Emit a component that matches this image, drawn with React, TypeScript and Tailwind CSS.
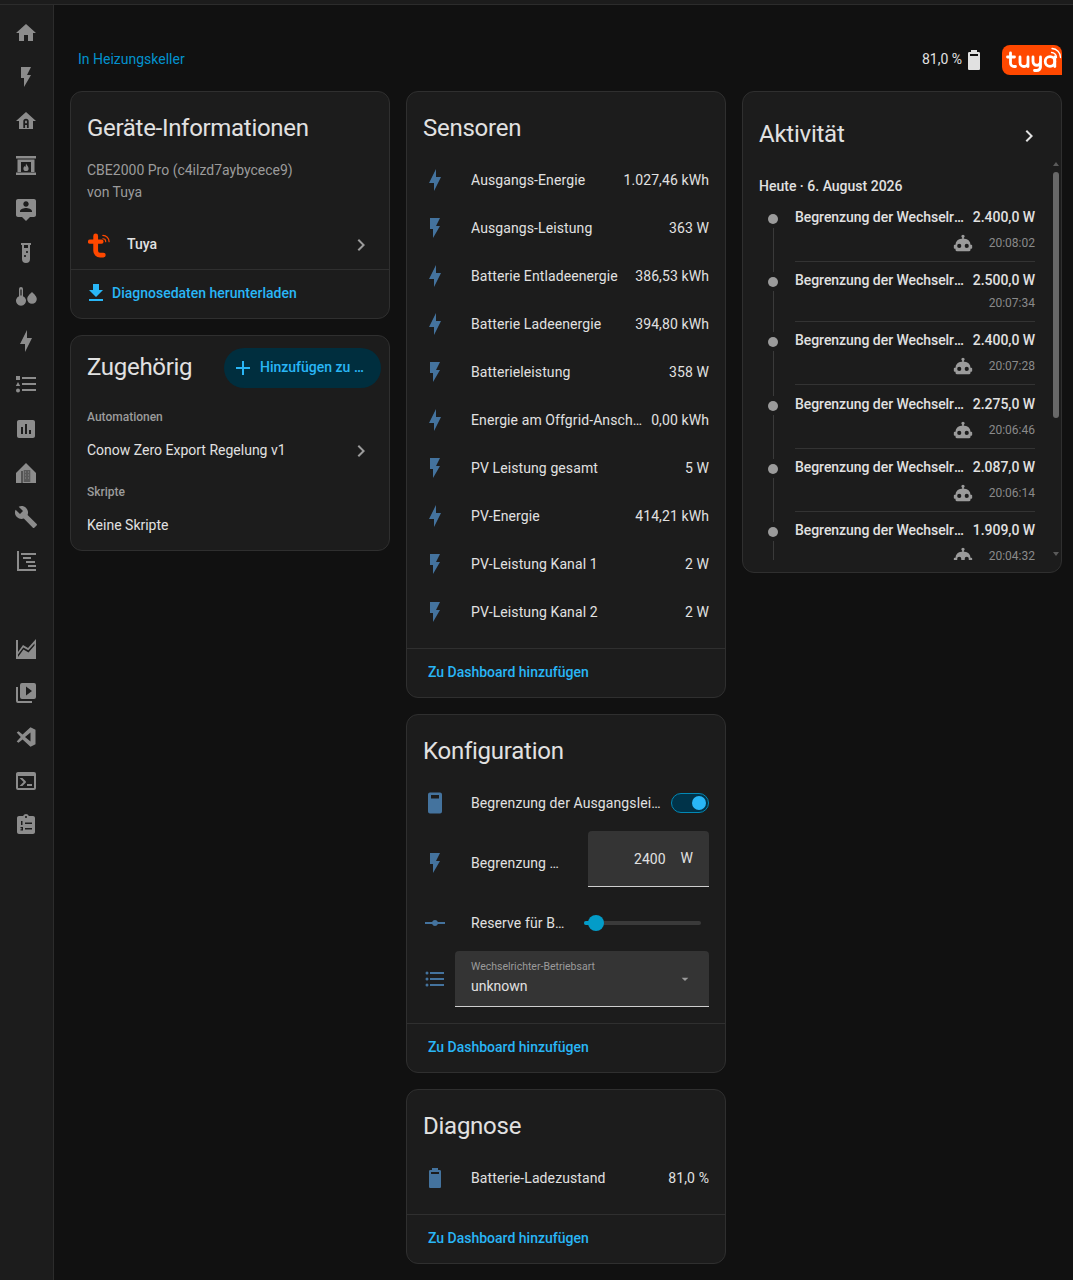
const BOLT = "M11 15H6L13 1V9H18L11 23V15Z"
const FLASH = "M7,2V13H10V22L17,10H13L17,2H7Z"
const BATTERY = "M16,8H8V6H16M16.67,4H15V2H9V4H7.33A1.33,1.33 0 0,0 6,5.33V20.66C6,21.4 6.6,22 7.33,22H16.67C17.41,22 18,21.4 18,20.67V5.33C18,4.6 17.4,4 16.67,4Z"
const ROBOT = "M12,2A2,2 0 0,1 14,4C14,4.74 13.6,5.39 13,5.73V7H14A7,7 0 0,1 21,14H22A1,1 0 0,1 23,15V18A1,1 0 0,1 22,19H21V20A2,2 0 0,1 19,22H5A2,2 0 0,1 3,20V19H2A1,1 0 0,1 1,18V15A1,1 0 0,1 2,14H3A7,7 0 0,1 10,7H11V5.73C10.4,5.39 10,4.74 10,4A2,2 0 0,1 12,2M7.5,13A2.5,2.5 0 0,0 5,15.5A2.5,2.5 0 0,0 7.5,18A2.5,2.5 0 0,0 10,15.5A2.5,2.5 0 0,0 7.5,13M16.5,13A2.5,2.5 0 0,0 14,15.5A2.5,2.5 0 0,0 16.5,18A2.5,2.5 0 0,0 19,15.5A2.5,2.5 0 0,0 16.5,13Z"
const CHEVRON = "M8.59,16.58L13.17,12L8.59,7.41L10,6L16,12L10,18L8.59,16.58Z"
const LIST = "M7,5H21V7H7V5M7,13V11H21V13H7M4,4.5A1.5,1.5 0 0,1 5.5,6A1.5,1.5 0 0,1 4,7.5A1.5,1.5 0 0,1 2.5,6A1.5,1.5 0 0,1 4,4.5M4,10.5A1.5,1.5 0 0,1 5.5,12A1.5,1.5 0 0,1 4,13.5A1.5,1.5 0 0,1 2.5,12A1.5,1.5 0 0,1 4,10.5M7,19V17H21V19H7M4,16.5A1.5,1.5 0 0,1 5.5,18A1.5,1.5 0 0,1 4,19.5A1.5,1.5 0 0,1 2.5,18A1.5,1.5 0 0,1 4,16.5Z"

function Icon({ d, className }: { d: string; className: string }) {
  return (
    <svg viewBox="0 0 24 24" className={className} fill="currentColor">
      <path d={d} fillRule="evenodd" />
    </svg>
  )
}

const topNav = [
  "M10,20V14H14V20H19V12H22L12,3L2,12H5V20H10Z",
  FLASH,
  "M12 3L2 12h3v8h14v-8h3L12 3zM9.3 19v-6.5a2.7 2.7 0 015.4 0V19h-1.8v-3h-1.8v3H9.3zM11.1 14.3h1.8v-1.8a.9.9 0 00-1.8 0v1.8z",
  "M2 3h20v2.500H2V3zM3.500 6.500h17V19h-17V6.500zM7 9v10h10V9H7zM2 19.500h20V22H2v-2.500zM12 10.500c.4 1.600 2.600 2.600 2.600 5a2.600 2.600 0 01-5.200 0c0-1.300.8-2 1.200-2.600.3.600.6.800 1 .9.2-1.100.2-2.200.4-3.300z",
  "M20 2H4C2.9 2 2 2.9 2 4V18C2 19.1 2.9 20 4 20H8L12 24L16 20H20C21.1 20 22 19.1 22 18V4C22 2.9 21.1 2 20 2M12 4.3C13.5 4.3 14.7 5.5 14.7 7C14.7 8.5 13.5 9.7 12 9.7C10.5 9.7 9.3 8.5 9.3 7C9.3 5.5 10.5 4.3 12 4.3M18 15H6V14.1C6 12.1 10 11 12 11C14 11 18 12.1 18 14.1V15Z",
  "M7,2V4H8V18A4,4 0 0,0 12,22A4,4 0 0,0 16,18V4H17V2H7M11,16C10.4,16 10,15.6 10,15C10,14.4 10.4,14 11,14C11.6,14 12,14.4 12,15C12,15.6 11.6,16 11,16M13,12C12.4,12 12,11.6 12,11C12,10.4 12.4,10 13,10C13.6,10 14,10.4 14,11C14,11.6 13.6,12 13,12M14,7H10V4H14V7Z",
  "M7 2a2 2 0 012 2v7.200a5 5 0 11-4 0V4a2 2 0 012-2zM6.400 4.500v6h1.200v-6h-1.200zM18 7s4.800 3.900 4.800 7a4.800 4.800 0 01-9.600 0C13.200 10.900 18 7 18 7z",
  BOLT,
  "M2 3h4v4H2V3zM8 4h14v2H8V4zM4 9l2.200 4H1.800L4 9zM8 10h14v2H8v-2zM4 15.500a2 2 0 110 4 2 2 0 010-4zM8 16h14v2H8v-2z",
  "M5 3H19C20.100 3 21 3.900 21 5V19C21 20.100 20.100 21 19 21H5C3.900 21 3 20.100 3 19V5C3 3.900 3.900 3 5 3ZM9 17V10H7V17H9ZM13 17V7H11V17H13ZM17 17V13H15V17H17Z",
]

const midNav = [
  "M22.7,19L13.6,9.9C14.5,7.6 14,4.9 12.1,3C10.1,1 7.1,0.6 4.7,1.7L9,6L6,9L1.600,4.700C0.400,7.100 0.900,10.100 2.900,12.100C4.800,14 7.500,14.500 9.800,13.600L18.900,22.700C19.300,23.100 19.900,23.100 20.300,22.700L22.600,20.400C23.100,20 23.100,19.300 22.700,19Z",
  "M3 2h2v18h17v2H3V2zM7 4h15v2H7V4zM9 8h8v2H9V8zM12 12h9v2h-9v-2zM14 16h8v2h-8v-2z",
]

const bottomNav = [
  "M2 3H4V15L9 8L14 11L22 2V22H2ZM4 20L9.500 12.500L14.500 15.500L20.500 8.500V6.500L14.300 13.300L9.300 10.500L4 17.500Z",
  "M4,6H2V20A2,2 0 0,0 4,22H18V20H4V6M20,2H8A2,2 0 0,0 6,4V16A2,2 0 0,0 8,18H20A2,2 0 0,0 22,16V4A2,2 0 0,0 20,2M12,14.500V5.500L18,10L12,14.500Z",
  "M16.500 2.200L21.500 4.700V19.300L16.500 21.800L8.600 14.600L4.500 17.800L2.700 16.600L6.800 12L2.700 7.400L4.500 6.200L8.600 9.400L16.500 2.200ZM16.500 7.400L11 12L16.500 16.600V7.400Z",
  "M20,19V7H4V19H20M20,3A2,2 0 0,1 22,5V19A2,2 0 0,1 20,21H4A2,2 0 0,1 2,19V5C2,3.890 2.900,3 4,3H20M13,17V15H18V17H13M9.580,13L5.570,9H8.400L11.700,12.300C12.090,12.690 12.090,13.330 11.700,13.720L8.420,17H5.590L9.580,13Z",
  "M19 3H14.820C14.400 1.840 13.300 1 12 1C10.700 1 9.600 1.840 9.180 3H5C3.900 3 3 3.900 3 5V19C3 20.100 3.900 21 5 21H19C20.100 21 21 20.100 21 19V5C21 3.900 20.100 3 19 3M12 3C12.550 3 13 3.450 13 4C13 4.550 12.550 5 12 5C11.450 5 11 4.550 11 4C11 3.450 11.450 3 12 3ZM7 8H8.500V12H7V8ZM11 9.500H18V11H11V9.500ZM6.500 14H9V17.500H6.500V16.200H7.700V15.300H6.500V14ZM11 15H18V16.500H11V15Z",
]

const sensors = [
  { icon: BOLT, name: "Ausgangs-Energie", value: "1.027,46 kWh" },
  { icon: FLASH, name: "Ausgangs-Leistung", value: "363 W" },
  { icon: BOLT, name: "Batterie Entladeenergie", value: "386,53 kWh" },
  { icon: BOLT, name: "Batterie Ladeenergie", value: "394,80 kWh" },
  { icon: FLASH, name: "Batterieleistung", value: "358 W" },
  { icon: BOLT, name: "Energie am Offgrid-Anschluss", value: "0,00 kWh" },
  { icon: FLASH, name: "PV Leistung gesamt", value: "5 W" },
  { icon: BOLT, name: "PV-Energie", value: "414,21 kWh" },
  { icon: FLASH, name: "PV-Leistung Kanal 1", value: "2 W" },
  { icon: FLASH, name: "PV-Leistung Kanal 2", value: "2 W" },
]

const activity = [
  { value: "2.400,0 W", time: "20:08:02", robot: true },
  { value: "2.500,0 W", time: "20:07:34", robot: false },
  { value: "2.400,0 W", time: "20:07:28", robot: true },
  { value: "2.275,0 W", time: "20:06:46", robot: true },
  { value: "2.087,0 W", time: "20:06:14", robot: true },
  { value: "1.909,0 W", time: "20:04:32", robot: true },
]

function NavIcon({ d }: { d: string }) {
  return (
    <div className="flex h-[44px] w-[52px] items-center justify-center">
      <Icon d={d} className="h-6 w-6 text-[#8c8c8c]" />
    </div>
  )
}

function Sidebar() {
  return (
    <aside className="flex w-[54px] shrink-0 flex-col border-r border-[#2c2c2c] bg-[#1c1c1c] pt-[6px]">
      {topNav.map((d, i) => (
        <NavIcon key={i} d={d} />
      ))}
      <div className="flex h-[44px] w-[52px] items-center justify-center">
        <svg viewBox="0 0 24 24" className="h-6 w-6 text-[#8c8c8c]" fill="currentColor">
          <path d="M12 2L2 12v10h20V12L12 2z" />
          <path d="M7.500 10h1v12h-1z" fill="#1c1c1c" />
          <path d="M9.700 9h6.600v12H9.700z" fill="#5a5a5a" />
          <path d="M11 10.500h1v1h-1zM14 10.500h1v1h-1zM11 13.500h1v1h-1zM14 13.500h1v1h-1zM11 16.500h1v1h-1zM14 16.500h1v1h-1z" fill="#8c8c8c" />
        </svg>
      </div>
      {midNav.map((d, i) => (
        <NavIcon key={i} d={d} />
      ))}
      <div className="h-[44px]" />
      {bottomNav.map((d, i) => (
        <NavIcon key={i} d={d} />
      ))}
    </aside>
  )
}

function Card({ title, children, className = "" }: { title?: string; children: React.ReactNode; className?: string }) {
  return (
    <section className={`rounded-xl border border-[#2f2f2f] bg-[#1c1c1c] ${className}`}>
      {title && <h2 className="mb-3 px-4 pt-5 text-2xl leading-8 font-normal tracking-[-0.25px] text-[#e1e1e1]">{title}</h2>}
      {children}
    </section>
  )
}

function DashboardLink() {
  return (
    <div className="flex h-[49px] items-center border-t border-[#2f2f2f] px-[21px] pb-[2px] text-sm font-medium text-[#29b6f6]">
      Zu Dashboard hinzufügen
    </div>
  )
}

function EntityRow({ icon, name, value }: { icon: string; name: string; value: string }) {
  return (
    <div className="flex h-12 items-center px-4 text-sm tracking-[0.1px] text-[#e1e1e1]">
      <Icon d={icon} className="mr-6 h-6 w-6 shrink-0 text-[#44739e]" />
      <span className="min-w-0 flex-1 truncate">{name}</span>
      <span className="ml-2 shrink-0">{value}</span>
    </div>
  )
}

function TuyaMark() {
  return (
    <svg viewBox="0 0 24 26" className="mt-[2px] ml-px h-[25px] w-[23px]" fill="none" stroke="#ff4800" strokeLinecap="round">
      <path d="M8 3v15.500a4.500 4.500 0 004.500 4.500H16" strokeWidth="5" />
      <path d="M2 9h12" strokeWidth="4.500" />
      <path d="M15.500 6a3 3 0 013 3M15.500 2.500a6.500 6.500 0 016.500 6.500" strokeWidth="1.200" />
    </svg>
  )
}

function TuyaLogo() {
  return (
    <svg viewBox="0 0 60 30" className="h-[30px] w-[60px]">
      <path d="M8 0H52A8 8 0 0160 8V30H8A8 8 0 010 22V8A8 8 0 018 0Z" fill="#ff4800" />
      <g fill="none" stroke="#fff" strokeWidth="2.800" strokeLinecap="round" strokeLinejoin="round">
        <path d="M8.500 8v10a3.500 3.500 0 003.500 3.500h1.500M5.500 12h7" />
        <path d="M18 12v5.500a4 4 0 008 0V12M26 17.500v4" />
        <path d="M31 12v4.500a3.500 3.500 0 007.500 0V12M38.500 16v6a4 4 0 01-4 3.500h-2" />
        <circle cx="48" cy="16.500" r="4.800" />
        <path d="M52.800 12v9.500" />
      </g>
      <path d="M49.500 7.500a5 5 0 015 5M50 3.500a9 9 0 018.500 9" fill="none" stroke="#fff" strokeWidth="1.300" strokeLinecap="round" />
    </svg>
  )
}

function DeviceInfoCard() {
  return (
    <Card>
      <h2 className="px-4 pt-5 text-2xl leading-8 font-normal tracking-[-0.3px] text-[#e1e1e1]">Geräte-Informationen</h2>
      <div className="mt-[15px] px-4 text-sm leading-[22px] text-[#9b9b9b]">
        <div>CBE2000 Pro (c4ilzd7aybycece9)</div>
        <div>von Tuya</div>
      </div>
      <div className="mt-[17px] flex h-[49px] items-center pr-4 pb-px pl-4 text-sm font-medium text-[#e1e1e1]">
        <TuyaMark />
        <span className="ml-4 flex-1">Tuya</span>
        <Icon d={CHEVRON} className="mt-[2px] h-6 w-6 text-[#9b9b9b]" />
      </div>
      <div className="flex h-[49px] items-center gap-1 border-t border-[#2f2f2f] pb-[3px] pl-[13px] text-sm font-medium text-[#29b6f6]">
        <Icon d="M5,20H19V18H5M19,9H15V3H9V9H5L12,16L19,9Z" className="h-6 w-6" />
        Diagnosedaten herunterladen
      </div>
    </Card>
  )
}

function RelatedCard() {
  return (
    <Card className="pb-px">
      <div className="flex items-center justify-between pt-3 pr-2 pl-4">
        <h2 className="mb-[2px] text-2xl leading-8 font-normal tracking-[-0.3px] text-[#e1e1e1]">Zugehörig</h2>
        <button className="flex h-10 w-[157px] items-center rounded-[20px] bg-[#002e3e] pl-[7px] text-sm font-medium text-[#29b6f6]">
          <Icon d="M19,13H13V19H11V13H5V11H11V5H13V11H19V13Z" className="mr-[5px] h-6 w-6 shrink-0" />
          <span className="mb-[2px] min-w-0 truncate pr-[17px]">Hinzufügen zu Dashboard</span>
        </button>
      </div>
      <div className="mt-[21px] px-4 text-xs leading-4 font-medium text-[#9b9b9b]">Automationen</div>
      <div className="mt-px flex h-12 items-center px-4 text-sm text-[#e1e1e1]">
        <span className="flex-1">Conow Zero Export Regelung v1</span>
        <Icon d={CHEVRON} className="mt-[2px] h-6 w-6 text-[#9b9b9b]" />
      </div>
      <div className="mt-[10px] px-4 text-xs leading-4 font-medium text-[#9b9b9b]">Skripte</div>
      <div className="mt-px flex h-12 items-center px-4 text-sm text-[#e1e1e1]">Keine Skripte</div>
    </Card>
  )
}

function SensorsCard() {
  return (
    <Card title="Sensoren">
      <div className="pb-3">
        {sensors.map((s) => (
          <EntityRow key={s.name} icon={s.icon} name={s.name} value={s.value} />
        ))}
      </div>
      <DashboardLink />
    </Card>
  )
}

function ConfigCard() {
  return (
    <Card title="Konfiguration">
      <div className="flex h-12 items-center px-4 text-sm tracking-[0.1px] text-[#e1e1e1]">
        <Icon d="M7 1.500h10a2 2 0 012 2v17a2 2 0 01-2 2H7a2 2 0 01-2-2v-17a2 2 0 012-2zM8 4v3.500h8V4H8z" className="mr-6 h-6 w-6 shrink-0 text-[#44739e]" />
        <span className="min-w-0 flex-1 truncate">Begrenzung der Ausgangsleistung</span>
        <div className="ml-2 flex h-5 w-[38px] shrink-0 items-center justify-end rounded-full border border-[#0288b5] bg-[#003349] pr-[2px]">
          <div className="h-[14px] w-[14px] rounded-full bg-[#29b6f6]" />
        </div>
      </div>
      <div className="flex h-[72px] items-center px-4 text-sm tracking-[0.1px] text-[#e1e1e1]">
        <Icon d={FLASH} className="mr-6 h-6 w-6 shrink-0 text-[#44739e]" />
        <span className="min-w-0 flex-1 truncate">Begrenzung der Leistung</span>
        <div className="mb-2 ml-[27px] flex h-[56px] w-[121px] shrink-0 items-center justify-end rounded-t border-b border-[#cfcfcf] bg-[#343434] pr-[16px] tracking-normal">
          <span>2400</span>
          <span className="mb-[2px] ml-[15px]">W</span>
        </div>
      </div>
      <div className="flex h-12 items-center px-4 text-sm tracking-[0.1px] text-[#e1e1e1]">
        <Icon d="M2,11H9.170C9.580,9.830 10.690,9 12,9C13.310,9 14.420,9.830 14.830,11H22V13H14.830C14.420,14.170 13.310,15 12,15C10.690,15 9.580,14.170 9.170,13H2V11Z" className="mr-6 h-6 w-6 shrink-0 text-[#44739e]" />
        <span className="w-[96px] shrink-0 truncate">Reserve für Batterie</span>
        <div className="relative mr-2 ml-[17px] h-1 flex-1 rounded-full bg-[#3a3a3a]">
          <div className="h-1 w-[12px] rounded-l-full bg-[#039cc8]" />
          <div className="absolute top-[-6px] left-[4px] h-4 w-4 rounded-full bg-[#039cc8]" />
        </div>
      </div>
      <div className="flex items-center pt-1 pr-4 pb-4 pl-4">
        <Icon d={LIST} className="mr-2 h-6 w-6 shrink-0 text-[#44739e]" />
        <div className="relative h-[56px] flex-1 rounded-t border-b border-[#cfcfcf] bg-[#343434] pt-[9px] pl-4">
          <div className="text-[10.5px] leading-[14px] text-[#9b9b9b]">Wechselrichter-Betriebsart</div>
          <div className="mt-[2px] text-sm leading-5 text-[#e1e1e1]">unknown</div>
          <Icon d="M7,10L12,15L17,10H7Z" className="absolute top-[20px] right-[16px] h-4 w-4 text-[#9b9b9b]" />
        </div>
      </div>
      <DashboardLink />
    </Card>
  )
}

function DiagnosisCard() {
  return (
    <Card title="Diagnose">
      <div className="pb-3">
        <EntityRow icon={BATTERY} name="Batterie-Ladezustand" value="81,0 %" />
      </div>
      <DashboardLink />
    </Card>
  )
}

function ActivityCard() {
  return (
    <Card className="h-[482px]">
      <div className="flex items-center justify-between pt-[26px] pr-[20px] pl-4">
        <h2 className="text-2xl leading-8 font-normal tracking-[-0.25px] text-[#e1e1e1]">Aktivität</h2>
        <Icon d={CHEVRON} className="mt-[3px] h-6 w-6 text-[#e1e1e1]" />
      </div>
      <div className="relative mt-[10px] h-[400px] overflow-hidden pt-4 pr-[26px] pl-4">
        <div className="text-sm leading-5 font-medium text-[#e1e1e1]">Heute · 6. August 2026</div>
        <div className="mt-[11px]">
          {activity.map((a, i) => (
            <div key={i} className="flex">
              <div className="mr-2 flex w-[28px] shrink-0 flex-col items-center">
                <div className="mt-[7px] h-[10px] w-[10px] rounded-full bg-[#9b9b9b]" />
                <div className="mt-1 -mb-[2px] w-px flex-1 bg-[#3a3a3a]" />
              </div>
              <div className={`min-w-0 flex-1 ${a.robot ? "pb-[8.3px]" : "pb-2"}`}>
                <div className={`border-b border-[#333333] ${a.robot ? "pb-[6px]" : "pb-[9px]"}`}>
                  <div className="flex h-5 items-center text-sm font-medium tracking-[-0.05px] text-[#e1e1e1]">
                    <span className="min-w-0 flex-1 truncate">Begrenzung der Wechselrichter-Ausgangsleistung</span>
                    <span className="ml-[6px] shrink-0">{a.value}</span>
                  </div>
                  <div className={`mt-1 flex items-center justify-end text-xs text-[#8a8a8a] ${a.robot ? "h-6" : "h-[18px]"}`}>
                    {a.robot && <Icon d={ROBOT} className="mr-[16px] h-[20px] w-[20px] text-[#9b9b9b]" />}
                    <span>{a.time}</span>
                  </div>
                </div>
              </div>
            </div>
          ))}
        </div>
        {/* scrollbar */}
        <div className="absolute top-[12px] right-[2px] h-[246px] w-[6px] rounded-full bg-[#686868]" />
        <div className="absolute top-[2px] right-[2px] h-0 w-0 border-x-[3px] border-b-[4px] border-x-transparent border-b-[#5a5a5a]" />
        <div className="absolute right-[2px] bottom-[4px] h-0 w-0 border-x-[3px] border-t-[4px] border-x-transparent border-t-[#5a5a5a]" />
      </div>
    </Card>
  )
}

export default function App() {
  return (
    <div className="flex min-h-screen flex-col bg-[#111111] font-['Roboto',sans-serif]">
      <div className="h-[5px] border-b border-[#2c2c2c] bg-[#1c1c1c]" />
      <div className="flex flex-1">
        <Sidebar />
        <main className="min-w-0 flex-1 pt-[40px] pr-[11px] pl-4">
          <header className="mb-4 flex h-[30px] items-center pl-2 text-sm">
            <span className="mb-[2px] flex-1 text-[#0391ce]">In Heizungskeller</span>
            <span className="mb-[2px] text-[#e1e1e1]">81,0 %</span>
            <Icon d={BATTERY} className="mr-[16px] h-6 w-6 text-[#e1e1e1]" />
            <TuyaLogo />
          </header>
          <div className="flex items-start gap-4">
            <div className="flex w-[320px] flex-col gap-4">
              <DeviceInfoCard />
              <RelatedCard />
            </div>
            <div className="flex w-[320px] flex-col gap-4">
              <SensorsCard />
              <ConfigCard />
              <DiagnosisCard />
            </div>
            <div className="w-[320px]">
              <ActivityCard />
            </div>
          </div>
        </main>
      </div>
    </div>
  )
}
